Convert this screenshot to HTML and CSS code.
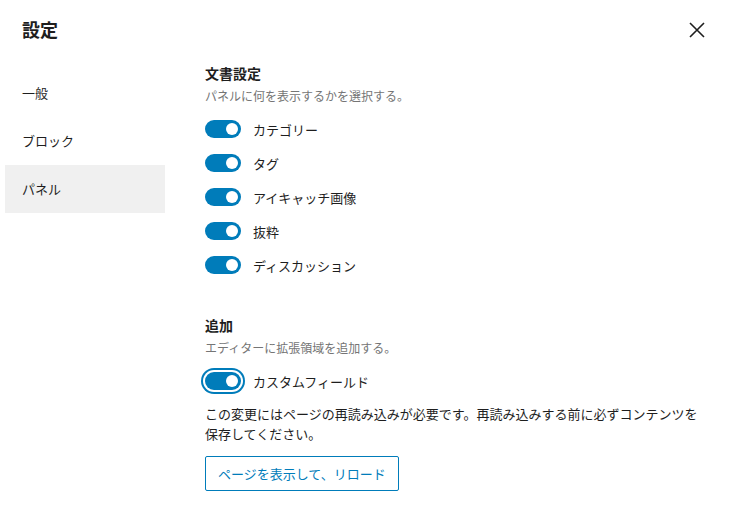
FILE: index.html
```html
<!DOCTYPE html>
<html lang="ja">
<head>
    <meta charset="UTF-8">
    <title>設定</title>
    <link rel="stylesheet" href="styles.css">
</head>
<body>
    <header class="kopf">
        <h1 class="titel">設定</h1>
        <button class="luk" aria-label="閉じる">
            <svg width="24" height="24" viewBox="0 0 24 24"><path d="M5 5 L19 19 M19 5 L5 19" stroke="#1e1e1e" stroke-width="1.6" fill="none"/></svg>
        </button>
    </header>

    <div class="indhold">
        <nav class="menu">
            <a href="#" class="punkt">一般</a>
            <a href="#" class="punkt">ブロック</a>
            <a href="#" class="punkt valgt">パネル</a>
        </nav>

        <main class="panel">
            <section class="gruppe">
                <h2>文書設定</h2>
                <p class="note">パネルに何を表示するかを選択する。</p>
                <label class="raekke"><span class="kontakt"></span>カテゴリー</label>
                <label class="raekke"><span class="kontakt"></span>タグ</label>
                <label class="raekke"><span class="kontakt"></span>アイキャッチ画像</label>
                <label class="raekke"><span class="kontakt"></span>抜粋</label>
                <label class="raekke"><span class="kontakt"></span>ディスカッション</label>
            </section>

            <section class="gruppe ekstra">
                <h2>追加</h2>
                <p class="note">エディターに拡張領域を追加する。</p>
                <label class="raekke"><span class="kontakt fokus"></span>カスタムフィールド</label>
                <p class="besked">この変更にはページの再読み込みが必要です。再読み込みする前に必ずコンテンツを保存してください。</p>
                <button class="knap">ページを表示して、リロード</button>
            </section>
        </main>
    </div>
</body>
</html>
```

FILE: styles.css
```css
body {
    margin: 0;
    background-color: #fff;
    color: #1e1e1e;
    font-family: "Noto Sans CJK JP", "Noto Sans", sans-serif;
    font-size: 13px;
}

.kopf {
    display: flex;
    align-items: center;
    justify-content: space-between;
    height: 58px;
    padding: 0 22px 0 22px;
}

.titel {
    margin: 0;
    font-size: 18px;
    font-weight: 700;
}

.luk {
    background: none;
    border: 0;
    padding: 0;
    margin-top: 2px;
    width: 24px;
    height: 24px;
    cursor: pointer;
}

.indhold {
    display: flex;
    gap: 40px;
}

.menu {
    display: flex;
    flex-direction: column;
    width: 160px;
    margin-left: 5px;
    padding-top: 11px;
}

.punkt {
    display: flex;
    align-items: center;
    height: 48px;
    padding-left: 17px;
    padding-bottom: 1px;
    box-sizing: border-box;
    color: #1e1e1e;
    text-decoration: none;
    font-size: 13px;
}

.valgt {
    background-color: #f0f0f0;
}

.panel {
    flex: 1;
    padding: 5px 26px 0 0;
}

.gruppe h2 {
    margin: 0;
    font-size: 14px;
    line-height: 20px;
    font-weight: 700;
}

.note {
    margin: 4px 0 7px 0;
    font-size: 12px;
    line-height: 18px;
    color: #757575;
}

.raekke {
    display: flex;
    align-items: center;
    gap: 12px;
    height: 34px;
    font-size: 13px;
}

.kontakt {
    position: relative;
    width: 36px;
    height: 18px;
    border-radius: 9px;
    background-color: #007cba;
}

.kontakt::after {
    content: "";
    position: absolute;
    right: 3px;
    top: 3px;
    width: 12px;
    height: 12px;
    border-radius: 50%;
    background-color: #fff;
}

.fokus {
    box-shadow: 0 0 0 2px #fff, 0 0 0 4px #007cba;
}

.ekstra {
    margin-top: 33px;
}

.besked {
    margin: 6px 0 12px 0;
    line-height: 20px;
    font-size: 13px;
}

.knap {
    height: 35px;
    padding: 0 12px;
    background: #fff;
    border: 1px solid #007cba;
    border-radius: 2px;
    color: #007cba;
    font-family: inherit;
    font-size: 13px;
}
```
